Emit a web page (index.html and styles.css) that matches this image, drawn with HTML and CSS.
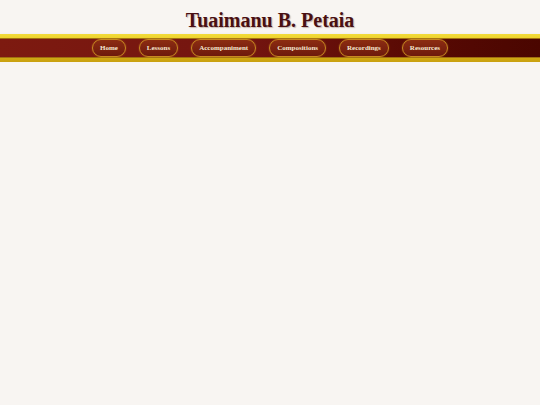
FILE: index.html
```html
<!DOCTYPE html>
<html>
<head>
<meta charset="utf-8">
<link rel="stylesheet" href="styles.css">
</head>
<body>
<header class="site-header">
  <h1 class="site-title">Tuaimanu B. Petaia</h1>
  <nav class="main-nav">
    <div class="nav-band">
      <a class="nav-link" href="#">Home</a>
      <a class="nav-link" href="#">Lessons</a>
      <a class="nav-link" href="#">Accompaniment</a>
      <a class="nav-link" href="#">Compositions</a>
      <a class="nav-link" href="#">Recordings</a>
      <a class="nav-link" href="#">Resources</a>
    </div>
  </nav>
</header>
</body>
</html>
```
FILE: styles.css
```css
html, body {
  margin: 0;
  padding: 0;
  background: #f8f5f2;
  font-family: "Liberation Serif", "Times New Roman", serif;
}
.site-header {
  padding-top: 9px;
}
.site-title {
  margin: 0;
  text-align: center;
  font-size: 20px;
  line-height: 23px;
  font-weight: bold;
  color: #4a0f12;
  text-shadow: 1px 1px 1px rgba(80, 40, 20, 0.3);
}
.main-nav {
  margin-top: 2px;
  padding: 4px 0;
  background: linear-gradient(to bottom, #f2dc3a 0%, #e6c21a 40%, #c9a010 100%);
  box-shadow: 0 3px 4px rgba(60, 40, 20, 0.35);
}
.nav-band {
  height: 20px;
  display: flex;
  justify-content: center;
  align-items: center;
  gap: 13px;
  background: linear-gradient(to right, #7d1a10 0%, #741510 45%, #5a0a04 75%, #4a0600 100%);
  box-shadow: inset 0 1px 0 #a07010, inset 0 -1px 0 #a07010;
}
.nav-link {
  display: block;
  height: 16px;
  line-height: 16px;
  padding: 0 7px;
  border: 1px solid #c88a20;
  border-radius: 9px;
  background: linear-gradient(to bottom, #8c2c12, #6e1a0c);
  color: #f6e8d2;
  font-size: 7px;
  font-weight: bold;
  text-decoration: none;
  box-shadow: 0 0 2px rgba(255, 180, 60, 0.35);
}
```
